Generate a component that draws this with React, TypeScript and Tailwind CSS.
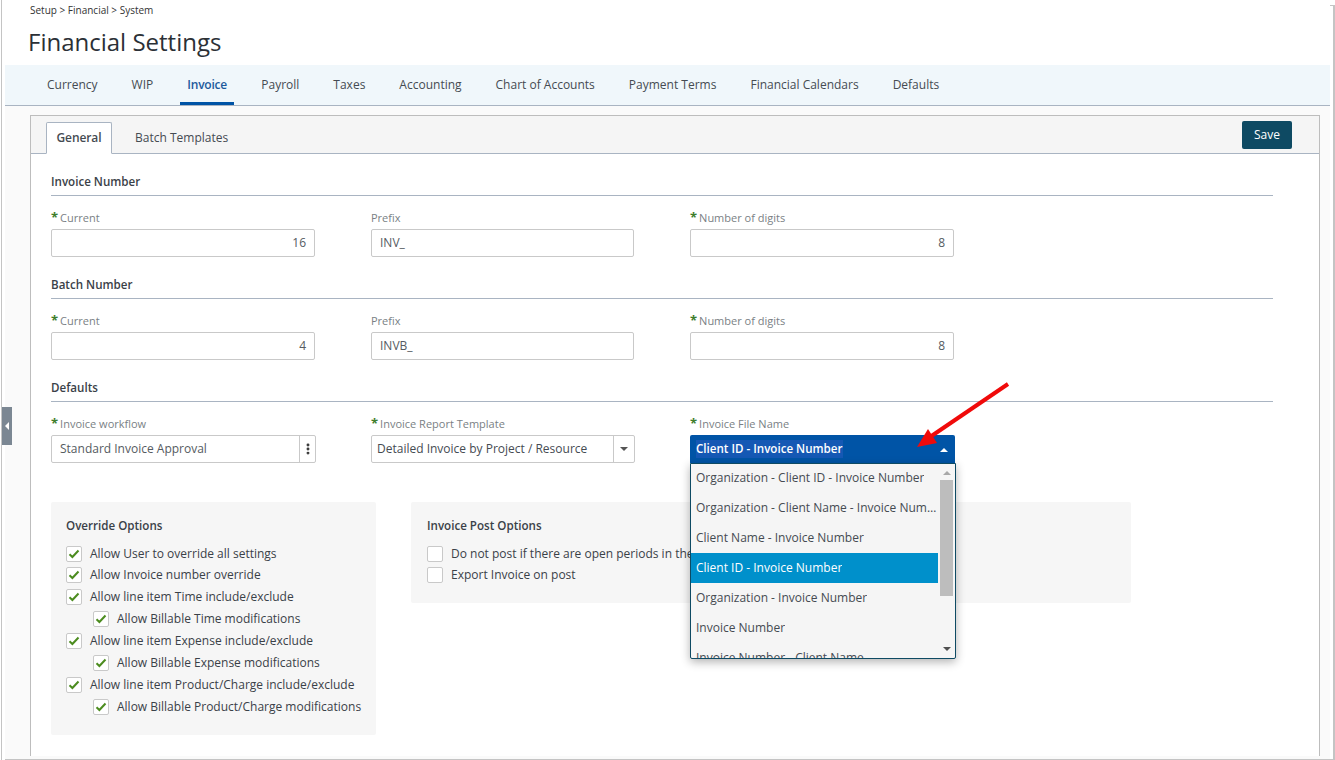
import { EllipsisVertical } from 'lucide-react';

const navTabs = ['Currency', 'WIP', 'Invoice', 'Payroll', 'Taxes', 'Accounting', 'Chart of Accounts', 'Payment Terms', 'Financial Calendars', 'Defaults'];

const fileNames = [
  'Organization - Client ID - Invoice Number',
  'Organization - Client Name - Invoice Number',
  'Client Name - Invoice Number',
  'Client ID - Invoice Number',
  'Organization - Invoice Number',
  'Invoice Number',
  'Invoice Number - Client Name',
];

const overrides = [
  { label: 'Allow User to override all settings' },
  { label: 'Allow Invoice number override' },
  { label: 'Allow line item Time include/exclude' },
  { label: 'Allow Billable Time modifications', child: true },
  { label: 'Allow line item Expense include/exclude' },
  { label: 'Allow Billable Expense modifications', child: true },
  { label: 'Allow line item Product/Charge include/exclude' },
  { label: 'Allow Billable Product/Charge modifications', child: true },
];

function Label({ text, required }: { text: string; required?: boolean }) {
  return (
    <div className="h-[13px] flex items-center text-[11px] leading-[13px] text-[#7a7f85] mb-[5px]">
      {required && <span className="text-[#3f7d2c] font-bold text-[13px] mr-[2px]">*</span>}
      {text}
    </div>
  );
}

function TextBox({ value, right, narrow }: { value: string; right?: boolean; narrow?: boolean }) {
  return (
    <div className={`h-[28px] ${narrow ? 'w-[263px]' : 'w-[264px]'} bg-white border border-[#c9c9c9] rounded-[2px] px-2 flex items-center text-[12px] text-[#555b61] ${right ? 'justify-end' : ''}`}>
      {value}
    </div>
  );
}

function Section({ title }: { title: string }) {
  return (
    <div className="h-[21px] border-b border-[#a9b4c2] text-[11.6px] leading-[14px] font-semibold text-[#3a4148]">{title}</div>
  );
}

function NumberRow({ current, prefix }: { current: string; prefix: string }) {
  return (
    <div className="grid grid-cols-[264px_264px_264px] gap-x-[56px] mt-[15px]">
      <div>
        <Label text="Current" required />
        <TextBox value={current} right />
      </div>
      <div>
        <Label text="Prefix" />
        <TextBox value={prefix} narrow />
      </div>
      <div className="-ml-[1px]">
        <Label text="Number of digits" required />
        <TextBox value="8" right />
      </div>
    </div>
  );
}

function Check({ label, checked }: { label: string; checked?: boolean }) {
  return (
    <div className="h-[22px] flex items-center text-[12px] text-[#3a4148] whitespace-nowrap">
      <span className="w-[16px] h-[16px] mr-[8px] shrink-0 bg-white border border-[#c9c9c9] rounded-[2px] flex items-center justify-center">
        {checked && (
          <svg width="12" height="10" viewBox="0 0 12 10">
            <path d="M1.5 5.2 L4.4 8 L10.5 1.5" fill="none" stroke="#4c8c1f" strokeWidth="2" />
          </svg>
        )}
      </span>
      {label}
    </div>
  );
}

export default function App() {
  return (
    <div className="relative w-[1335px] h-[760px] overflow-hidden bg-white font-['Open_Sans',sans-serif] text-[#3a4148]">
      <div className="h-[760px] ml-[1px] mr-[1px] border-l-[1px] border-[#c4c4c4] pl-[3px] flex flex-col">
        {/* page title */}
        <div className="h-[65px] shrink-0 pl-[23px]">
          <div className="pt-[4px] pl-[2px] text-[10px] leading-[13px] text-[#333]">Setup &gt; Financial &gt; System</div>
          <h1 className="mt-[9px] text-[24px] leading-[32px] text-[#2b3036]">Financial Settings</h1>
        </div>

        {/* main tabs */}
        <div className="h-[41px] shrink-0 w-[1325px] bg-[#f0f7fb] border-b border-[#a9b4c2] pl-[42px] flex gap-[34px] text-[12px]">
          {navTabs.map((t) => (
            <div
              key={t}
              className={`h-[40px] flex items-center whitespace-nowrap ${t === 'Invoice' ? 'relative w-[40px] font-semibold tracking-[-0.2px] text-[#1d5a9c]' : 'text-[#454b52]'}`}
            >
              {t}
              {t === 'Invoice' && <span className="absolute -left-[7px] -right-[7px] bottom-0 h-[3px] bg-[#0054a6]" />}
            </div>
          ))}
        </div>

        <div className="w-[1325px] flex-1 bg-[#fafafa] pl-[25px] pt-[9px] pb-[4px]">
          <div className="w-[1290px] h-full border border-[#bdbdbd] border-b-0 bg-white">
            {/* sub tabs */}
            <div className="h-[38px] bg-[#f5f5f5] border-b border-[#a9b4c2] pl-[15px] pr-[27px] flex items-end text-[12px]">
              <div className="h-[32px] w-[66px] -mb-[1px] bg-white border border-[#a9b4c2] border-b-white rounded-t-[2px] flex items-center justify-center font-semibold tracking-[-0.1px] text-[#454b52]">General</div>
              <div className="h-[31px] ml-[23px] flex items-center text-[#454b52]">Batch Templates</div>
              <button className="ml-auto mb-[4px] w-[50px] h-[28px] bg-[#0e4a63] rounded-[2px] text-white text-[12px]">Save</button>
            </div>

            <div className="pl-[20px] pr-[46px] pt-[21px]">
              <Section title="Invoice Number" />
              <NumberRow current="16" prefix="INV_" />

              <div className="mt-[21px]">
                <Section title="Batch Number" />
              </div>
              <NumberRow current="4" prefix="INVB_" />

              <div className="mt-[21px]">
                <Section title="Defaults" />
              </div>
              <div className="grid grid-cols-[264px_264px_264px] gap-x-[56px] mt-[15px]">
                <div>
                  <Label text="Invoice workflow" required />
                  <div className="h-[28px] w-[265px] bg-white border border-[#c9c9c9] rounded-[2px] flex items-center text-[12px] text-[#555b61]">
                    <span className="flex-1 pl-2">Standard Invoice Approval</span>
                    <span className="w-[16px] h-full border-l border-[#c9c9c9] flex items-center justify-center">
                      <EllipsisVertical size={14} strokeWidth={3} className="text-[#333]" />
                    </span>
                  </div>
                </div>
                <div>
                  <Label text="Invoice Report Template" required />
                  <div className="h-[28px] w-[264px] bg-white border border-[#c9c9c9] rounded-[2px] flex items-center text-[12px] text-[#454b52]">
                    <span className="flex-1 pl-[5px] whitespace-nowrap">Detailed Invoice by Project / Resource</span>
                    <span className="w-[21px] h-full border-l border-[#c9c9c9] flex items-center justify-center">
                      <span className="w-0 h-0 border-x-[4px] border-x-transparent border-t-[4px] border-t-[#555]" />
                    </span>
                  </div>
                </div>
                <div className="-ml-[1px]">
                  <Label text="Invoice File Name" required />
                </div>
              </div>

              <div className="flex gap-[35px] items-start mt-[39px]">
                <div className="w-[325px] h-[233px] shrink-0 bg-[#f6f6f6] rounded-[2px] pl-[15px] pt-[16px]">
                  <div className="text-[11.6px] leading-[16px] font-semibold text-[#3a4148] mb-[9px]">Override Options</div>
                  {overrides.map((o, i) => (
                    <div key={o.label} className={`${o.child ? 'pl-[27px]' : ''} ${i === 1 ? '-mt-[1px]' : ''}`}>
                      <Check label={o.label} checked />
                    </div>
                  ))}
                </div>
                <div className="w-[720px] h-[101px] shrink-0 bg-[#f6f6f6] rounded-[2px] pl-[16px] pt-[16px]">
                  <div className="text-[11.6px] leading-[16px] font-semibold text-[#3a4148] mb-[9px]">Invoice Post Options</div>
                  <Check label="Do not post if there are open periods in the" />
                  <div className="-mt-[1px]">
                    <Check label="Export Invoice on post" />
                  </div>
                </div>
              </div>
            </div>
          </div>
        </div>
      </div>

      {/* page frame lines */}
      <div className="absolute left-[5px] right-0 bottom-0 h-[1px] bg-[#c4c4c4]" />
      <div className="absolute right-0 top-[5px] bottom-0 w-[2px] bg-[#c4c4c4]" />
      <div className="absolute right-0 top-[5px] w-[5px] h-[1px] bg-[#c4c4c4]" />

      {/* sidebar collapse handle */}
      <div className="absolute left-[2px] top-[407px] w-[10px] h-[38px] bg-[#7b8793] flex items-center justify-center">
        <span className="w-0 h-0 border-y-[4px] border-y-transparent border-r-[4px] border-r-white" />
      </div>

      {/* open dropdown */}
      <div className="absolute left-[690px] top-[435px] w-[265px] h-[28px] bg-[#0054a6] rounded-t-[2px] flex items-center pl-[6px] text-[11.6px] font-semibold text-white">
        <span className="bg-[#1558b4]">Client ID - Invoice Number</span>
        <span className="absolute right-[7px] top-[13px] w-0 h-0 border-x-[4px] border-x-transparent border-b-[4px] border-b-white" />
      </div>
      <div className="absolute left-[690px] top-[463px] w-[266px] h-[196px] bg-[#f5f5f5] border border-[#0e4a63] rounded-b-[2px] shadow-[0_3px_10px_rgba(0,0,0,0.3)] overflow-hidden text-[12px] text-[#454b52]">
        <div className="w-[247px] -mt-[1px]">
          {fileNames.map((f) => (
            <div
              key={f}
              className={`h-[30px] pl-[5px] pr-[1px] flex items-center ${f === 'Client ID - Invoice Number' ? 'bg-[#0090cb] text-white' : ''}`}
            >
              <span className="truncate">{f}</span>
            </div>
          ))}
        </div>
        <div className="absolute right-0 top-0 bottom-0 w-[17px]">
          <span className="absolute left-[5px] top-[7px] w-0 h-0 border-x-[4px] border-x-transparent border-b-[4px] border-b-[#a8a8a8]" />
          <span className="absolute left-[2px] top-[16px] w-[13px] h-[116px] bg-[#bdbdbd]" />
          <span className="absolute left-[5px] bottom-[7px] w-0 h-0 border-x-[4px] border-x-transparent border-t-[4px] border-t-[#505050]" />
        </div>
      </div>

      {/* red annotation arrow */}
      <svg className="absolute left-[910px] top-[378px]" width="105" height="75" viewBox="910 378 105 75">
        <path d="M1008 384 L930 437" stroke="#f00a0a" strokeWidth="4" fill="none" />
        <path d="M917 447 L928 429 L937 443 Z" fill="#f00a0a" />
      </svg>
    </div>
  );
}
